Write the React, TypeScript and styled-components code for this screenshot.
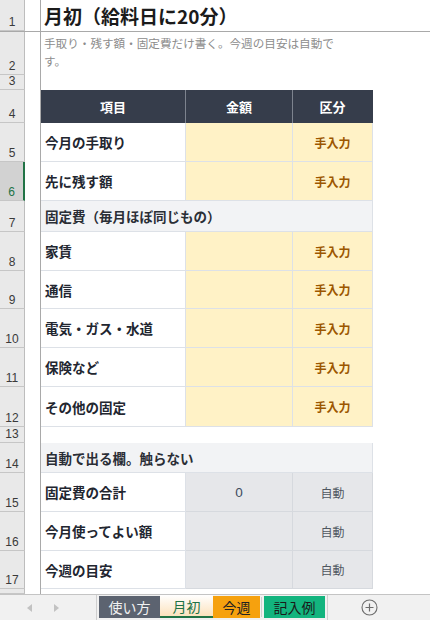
import styled, { createGlobalStyle, css } from "styled-components"

const GlobalStyle = createGlobalStyle`
    html, body {
        margin: 0;
        padding: 0;
        background: #ffffff;
    }
    body {
        font-family: "Noto Sans CJK JP", "Noto Sans", sans-serif;
        overflow: hidden;
    }
`

const GRID = "25px 16px 145px 107px 80px 1fr"

type RowDef = {
    n: number
    h: number
    kind: "title" | "note" | "blank" | "head" | "input" | "section" | "auto"
    label?: string
    value?: string
}

const rows: RowDef[] = [
    { n: 1, h: 32, kind: "title", label: "月初（給料日に20分）" },
    { n: 2, h: 43, kind: "note", label: "手取り・残す額・固定費だけ書く。今週の目安は自動です。" },
    { n: 3, h: 15, kind: "blank" },
    { n: 4, h: 33, kind: "head" },
    { n: 5, h: 39, kind: "input", label: "今月の手取り" },
    { n: 6, h: 39, kind: "input", label: "先に残す額" },
    { n: 7, h: 31, kind: "section", label: "固定費（毎月ほぼ同じもの）" },
    { n: 8, h: 39, kind: "input", label: "家賃" },
    { n: 9, h: 38, kind: "input", label: "通信" },
    { n: 10, h: 39, kind: "input", label: "電気・ガス・水道" },
    { n: 11, h: 39, kind: "input", label: "保険など" },
    { n: 12, h: 40, kind: "input", label: "その他の固定" },
    { n: 13, h: 16, kind: "blank" },
    { n: 14, h: 30, kind: "section", label: "自動で出る欄。触らない" },
    { n: 15, h: 39, kind: "auto", label: "固定費の合計", value: "0" },
    { n: 16, h: 39, kind: "auto", label: "今月使ってよい額" },
    { n: 17, h: 38, kind: "auto", label: "今週の目安" },
]

export default function App() {
    return (
        <>
            <GlobalStyle />
            <Window>
                <Sheet>
                    {rows.map((r) => (
                        <Row key={r.n} $h={r.h} $frozen={r.n === 1}>
                            <RowHead $selected={r.n === 6}>{r.n}</RowHead>
                            <ColA />
                            {renderCells(r)}
                        </Row>
                    ))}
                    <Row $h={5} $frozen={false}>
                        <RowHead $selected={false} />
                        <ColA />
                    </Row>
                </Sheet>
                <TabBar>
                    <Arrows>
                        <Arrow viewBox="0 0 6 8"><path d="M5 0 L0 4 L5 8 Z" /></Arrow>
                        <Arrow viewBox="0 0 6 8"><path d="M1 0 L6 4 L1 8 Z" /></Arrow>
                    </Arrows>
                    <Tabs>
                        <Tab $bg="#5c6370" $color="#f2f2f2">使い方</Tab>
                        <Tab $active $bg="#fce2bd" $color="#217346">月初</Tab>
                        <Tab $bg="#f6a10e" $color="#222">今週</Tab>
                        <Tab $bg="#13b47e" $color="#1a1a1a" $gapLeft>記入例</Tab>
                    </Tabs>
                    <AddSheet>
                        <svg width="17" height="17" viewBox="0 0 17 17">
                            <circle cx="8.5" cy="8.5" r="7.5" fill="none" stroke="#6d6d6d" strokeWidth="1.1" />
                            <path d="M8.5 4.5 V12.5 M4.5 8.5 H12.5" stroke="#6d6d6d" strokeWidth="1.2" />
                        </svg>
                    </AddSheet>
                </TabBar>
            </Window>
        </>
    )
}

function renderCells(r: RowDef) {
    switch (r.kind) {
        case "title":
            return <Title>{r.label}</Title>
        case "note":
            return <Note>{r.label}</Note>
        case "blank":
            return null
        case "head":
            return (
                <>
                    <HeadCell>項目</HeadCell>
                    <HeadCell>金額</HeadCell>
                    <HeadCell $last>区分</HeadCell>
                </>
            )
        case "section":
            return <Section>{r.label}</Section>
        case "input":
            return (
                <>
                    <Label>{r.label}</Label>
                    <Value $tone="input" />
                    <Kind $tone="input">手入力</Kind>
                </>
            )
        case "auto":
            return (
                <>
                    <Label>{r.label}</Label>
                    <Value $tone="auto">{r.value}</Value>
                    <Kind $tone="auto">自動</Kind>
                </>
            )
    }
}

const Window = styled.div`
    width: 430px;
    height: 620px;
    display: flex;
    flex-direction: column;
    overflow: hidden;
`

const Sheet = styled.div`
    flex: 1;
    display: flex;
    flex-direction: column;
    overflow: hidden;
`

const Row = styled.div<{ $h: number; $frozen: boolean }>`
    display: grid;
    grid-template-columns: ${GRID};
    height: ${(p) => p.$h}px;
    flex-shrink: 0;
    box-sizing: border-box;
    ${(p) =>
        p.$frozen &&
        css`
            border-bottom: 1px solid #a9a9a9;
        `}
`

const RowHead = styled.div<{ $selected: boolean }>`
    box-sizing: border-box;
    background: ${(p) => (p.$selected ? "#d2d2d2" : "#e9e9e9")};
    border-bottom: 1px solid #c6c6c6;
    border-right: ${(p) => (p.$selected ? "2px solid #217346" : "1px solid #bdbdbd")};
    color: ${(p) => (p.$selected ? "#217346" : "#3a3a3a")};
    font-family: "Liberation Sans", Arial, sans-serif;
    font-size: 12px;
    display: flex;
    align-items: flex-end;
    justify-content: center;
    padding-bottom: 1px;
    line-height: 13px;
    overflow: hidden;
`

const ColA = styled.div`
    border-right: 1px solid #a9a9a9;
`

const Title = styled.div`
    grid-column: 3 / -1;
    font-size: 19px;
    font-weight: 700;
    color: #1b1b1b;
    display: flex;
    align-items: center;
    padding-left: 3px;
    white-space: nowrap;
`

const Note = styled.div`
    grid-column: 3 / 6;
    font-size: 11.6px;
    color: #8c8c8c;
    line-height: 18px;
    padding: 2px 26px 0 3px;
`

const HeadCell = styled.div<{ $last?: boolean }>`
    background: #363d4b;
    color: #ffffff;
    font-size: 13px;
    font-weight: 700;
    display: flex;
    align-items: center;
    justify-content: center;
    border-right: 1px solid ${(p) => (p.$last ? "#363d4b" : "#7d838e")};
`

const cellBase = css`
    box-sizing: border-box;
    display: flex;
    align-items: center;
    border-bottom: 1px solid #dde1e7;
    border-right: 1px solid #dde1e7;
`

const Label = styled.div`
    ${cellBase};
    padding-left: 4px;
    font-size: 13.5px;
    font-weight: 700;
    color: #222630;
    white-space: nowrap;
`

const Section = styled.div`
    ${cellBase};
    grid-column: 3 / 6;
    background: #f2f3f5;
    padding-left: 4px;
    font-size: 13.5px;
    font-weight: 700;
    color: #2a2e36;
    white-space: nowrap;
`

const Value = styled.div<{ $tone: "input" | "auto" }>`
    ${cellBase};
    justify-content: center;
    background: ${(p) => (p.$tone === "input" ? "#fff2c6" : "#e6e7ea")};
    ${(p) => p.$tone === "auto" && css`border-color: #d6d9de;`}
    font-family: "Liberation Sans", Arial, sans-serif;
    font-size: 13.5px;
    color: #3d4c5e;
`

const Kind = styled.div<{ $tone: "input" | "auto" }>`
    ${cellBase};
    justify-content: center;
    background: ${(p) => (p.$tone === "input" ? "#fff2c6" : "#e6e7ea")};
    ${(p) => p.$tone === "auto" && css`border-color: #d6d9de;`}
    font-size: 12px;
    font-weight: ${(p) => (p.$tone === "input" ? 700 : 400)};
    color: ${(p) => (p.$tone === "input" ? "#9c5700" : "#4f5660")};
`

const TabBar = styled.div`
    height: 26px;
    flex-shrink: 0;
    box-sizing: border-box;
    background: #f1f1f1;
    border-top: 1px solid #c4c4c4;
    display: flex;
    align-items: stretch;
`

const Arrows = styled.div`
    width: 97px;
    box-sizing: border-box;
    border-right: 1px solid #cfcfcf;
    display: flex;
    align-items: center;
    gap: 20px;
    padding-left: 27px;
`

const Arrow = styled.svg`
    width: 6px;
    height: 8px;
    fill: #c2c2c2;
`

const Tabs = styled.div`
    display: flex;
    align-items: stretch;
    padding: 1px 0 2px 2px;
    border-right: 1px solid #cfcfcf;
    padding-right: 2px;
`

const Tab = styled.div<{ $bg: string; $color: string; $active?: boolean; $gapLeft?: boolean }>`
    box-sizing: border-box;
    padding: 0 ${(p) => (p.$active ? "12.5px" : "9.5px")};
    display: flex;
    align-items: center;
    justify-content: center;
    font-size: 14px;
    line-height: 1;
    color: ${(p) => p.$color};
    background: ${(p) => (p.$active ? `linear-gradient(#ffffff, ${p.$bg})` : p.$bg)};
    margin-left: ${(p) => (p.$gapLeft ? "4px" : "0")};
    ${(p) =>
        p.$active &&
        css`
            border-bottom: 2px solid #217346;
            margin-top: -1px;
        `}
    ${(p) =>
        p.$gapLeft &&
        css`
            box-shadow: -3px 0 0 -1px #f1f1f1, -4px 0 0 -1px #cfcfcf;
        `}
`

const AddSheet = styled.div`
    display: flex;
    align-items: center;
    padding-left: 33px;
`
